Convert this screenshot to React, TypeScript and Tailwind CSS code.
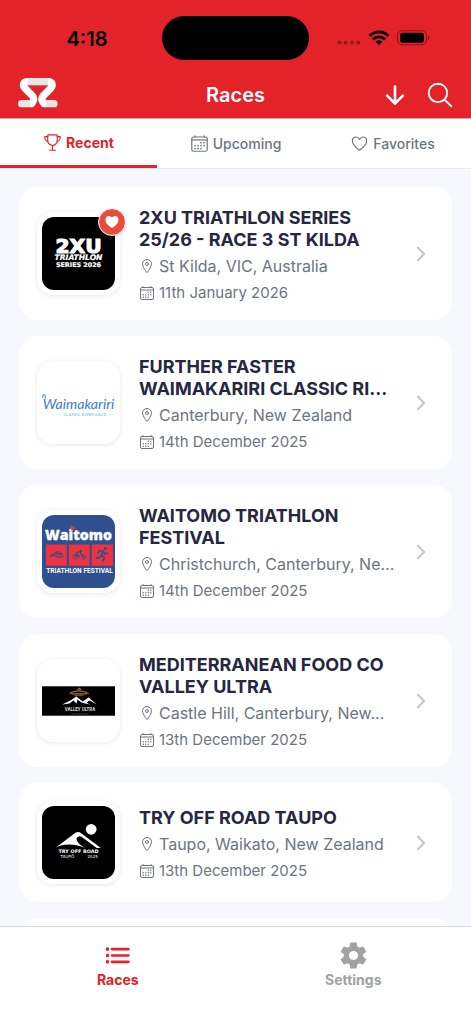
import type { ReactNode } from "react";
import {
  IoArrowDown,
  IoCalendarOutline,
  IoChevronForward,
  IoHeart,
  IoHeartOutline,
  IoList,
  IoLocationOutline,
  IoSearchOutline,
  IoSettingsSharp,
  IoTrophyOutline,
} from "react-icons/io5";

function BrandMark() {
  return (
    <svg viewBox="0 0 120 90" className="h-[30px] w-10" role="img" aria-label="Home">
      <g fill="none" strokeWidth="22">
        <path d="M26 11H94" stroke="#e6e6e6" />
        <path d="M11 77H40M79 77H108" stroke="#e6e6e6" strokeLinecap="round" />
        <path d="M29 11C15 11 13 23 22 32L43 53C51 62 46 77 36 77" stroke="#fff" />
        <path d="M90 11C104 11 106 23 97 32L76 53C68 62 73 77 83 77" stroke="#fff" />
      </g>
    </svg>
  );
}

function StatusIcons() {
  return (
    <svg viewBox="0 0 94 18" className="h-[18px] w-[94px]" aria-hidden="true">
      <g fill="#000" fillOpacity="0.3">
        <circle cx="3.5" cy="13.5" r="2.1" />
        <circle cx="9.7" cy="13.5" r="2.1" />
        <circle cx="16" cy="13.5" r="2.1" />
        <circle cx="22.2" cy="13.5" r="2.1" />
      </g>
      <g fill="none" stroke="#000" strokeWidth="2.8">
        <path d="M33.600 7C38.700 1.500 47.300 1.500 52.400 7" />
        <path d="M36.800 10.500C40.200 7 45.800 7 49.200 10.500" />
      </g>
      <path d="M39.700 12.700Q43 9.900 46.300 12.700L43 16Z" />
      <rect x="61.500" y="1.800" width="29" height="14" rx="4.500" fill="none" stroke="#000" strokeOpacity="0.4" />
      <rect x="64" y="3.800" width="24" height="10" rx="2.800" />
      <path d="M92 7V11Q93.200 10.400 93.200 9T92 7Z" fillOpacity="0.5" />
    </svg>
  );
}

function TwoXuLogo() {
  return (
    <svg viewBox="0 0 72 72" className="size-full rounded-xl bg-black">
      <g fill="#fff" textAnchor="middle" fontFamily="DejaVu Sans, sans-serif" fontWeight="700" stroke="#fff">
        <text x="36" y="35.500" fontSize="20" strokeWidth="1.200">2XU</text>
        <text x="36" y="42.800" fontSize="7.500" strokeWidth="0.2" fontStyle="italic">TRIATHLON</text>
        <text x="36" y="49.500" fontSize="6.300" strokeWidth="0.2">SERIES 2026</text>
      </g>
    </svg>
  );
}

function WaimakaririLogo() {
  return (
    <svg viewBox="0 0 72 72" className="size-full rounded-xl bg-white">
      <text x="36" y="42" textAnchor="middle" fontFamily="Lato, cursive" fontStyle="italic" fontSize="14" fill="#3b7bc0">Waimakariri</text>
      <path d="M0 31C2 27 4 28 3 32" fill="none" stroke="#3b7bc0" strokeWidth="1" />
      <path d="M10 48H19M65 48H71" stroke="#bfe6f5" strokeWidth="0.6" />
      <text x="42" y="49.500" textAnchor="middle" fontFamily="DejaVu Sans, sans-serif" fontWeight="700" fontSize="3.600" fill="#8dd3ef">CLASSIC RIVER RACE</text>
    </svg>
  );
}

function WaitomoLogo() {
  return (
    <svg viewBox="0 0 72 72" className="size-full rounded-xl bg-[#304f8f]">
      <text x="36" y="24.500" textAnchor="middle" fontFamily="Open Sans, sans-serif" fontWeight="800" fontSize="14" fill="#fff" stroke="#fff" strokeWidth="0.300">Waitomo</text>
      <path d="M28 10L33.500 13L29 15.500Z" fill="#ed3340" />
      <path d="M4 29H24.500V50H4ZM26.500 29H47V50H26.500ZM49 29H70V50H49Z" fill="#ed3340" />
      <g fill="none" stroke="#304f8f" strokeLinecap="round" strokeLinejoin="round">
        <path d="M8 41Q11 39.500 14 41T21 41" strokeWidth="1" />
        <path d="M9 39.500L14 38L17 39.500M12 38.500L15.500 36L18 38" strokeWidth="1.200" />
        <circle cx="19.300" cy="38.500" r="0.8" fill="#304f8f" />
        <circle cx="33" cy="41.500" r="2" strokeWidth="0.8" />
        <circle cx="41" cy="41.500" r="2" strokeWidth="0.8" />
        <path d="M33 41L34 37.500L37 36L39 39L41 41M34 38L37 41" strokeWidth="1.200" />
        <circle cx="38.500" cy="35.500" r="0.7" fill="#304f8f" />
        <path d="M60.500 35.500L58.500 39.500L61.500 42L60 45.500M58.500 39.500L56 42.500L53.500 42.500M60.500 35.500L57 35L55 37.500M60.500 36L62 38.500L64.500 37.500" strokeWidth="1.600" />
        <circle cx="62.500" cy="33" r="1" fill="#304f8f" />
      </g>
      <text x="37" y="57" textAnchor="middle" fontFamily="Roboto, sans-serif" fontWeight="700" fontSize="6.500" fill="#fff">TRIATHLON FESTIVAL</text>
    </svg>
  );
}

function ValleyUltraLogo() {
  return (
    <svg viewBox="0 0 72 72" className="size-full bg-white">
      <rect y="22" width="72" height="29" fill="#000" />
      <path d="M27 29Q36 24 46 29M29 29.500H44M35 25.500L37 24L38.500 25.500" fill="none" stroke="#a87a32" strokeWidth="1.100" />
      <path d="M32 31.200H41" stroke="#a87a32" strokeWidth="0.700" />
      <path d="M20 40L28 36L34 32L40 37L46 33L54 40L47 36L44 38L47 40L39 38L35 35L34 39L31 36L27 39Z" fill="#fff" />
      <text x="37.500" y="46.800" textAnchor="middle" fontFamily="Roboto, sans-serif" fontWeight="700" fontSize="4.400" fill="#ddd">VALLEY ULTRA</text>
      <path d="M29 49.300H46" stroke="#666" strokeWidth="0.700" strokeDasharray="1.500 0.700" />
    </svg>
  );
}

function TryOffRoadLogo() {
  return (
    <svg viewBox="0 0 72 72" className="size-full rounded-xl bg-black">
      <circle cx="48.500" cy="23" r="5.300" fill="#fff" />
      <path d="M13 41.500L33 26.500Q36 24.800 39 27L58 41.500H54L40 31Q36 28 34 32Q34 36 42 41.500Q36 38 26 38Q18 38 13 41.500Z" fill="#fff" />
      <g fill="#fff" fontFamily="DejaVu Sans, sans-serif" textAnchor="middle">
        <text x="36" y="46" fontSize="4.800" fontWeight="700">TRY OFF ROAD</text>
        <text x="25" y="50.800" fontSize="4">TAUPŌ</text>
        <text x="50" y="50.800" fontSize="4">2025</text>
      </g>
    </svg>
  );
}

type Race = { title: string; place: string; date: string; logo: ReactNode; favorite?: boolean };

const races: Race[] = [
  { title: "2XU TRIATHLON SERIES 25/26 - RACE 3 ST KILDA", place: "St Kilda, VIC, Australia", date: "11th January 2026", logo: <TwoXuLogo />, favorite: true },
  { title: "FURTHER FASTER WAIMAKARIRI CLASSIC RI...", place: "Canterbury, New Zealand", date: "14th December 2025", logo: <WaimakaririLogo /> },
  { title: "WAITOMO TRIATHLON FESTIVAL", place: "Christchurch, Canterbury, Ne...", date: "14th December 2025", logo: <WaitomoLogo /> },
  { title: "MEDITERRANEAN FOOD CO VALLEY ULTRA", place: "Castle Hill, Canterbury, New...", date: "13th December 2025", logo: <ValleyUltraLogo /> },
  { title: "TRY OFF ROAD TAUPO", place: "Taupo, Waikato, New Zealand", date: "13th December 2025", logo: <TryOffRoadLogo /> },
];

function RaceCard({ race }: { race: Race }) {
  return (
    <a href="#race" className="flex items-center rounded-[18px] bg-white py-4 pr-5 pl-[18px]">
      <div className="relative my-0.5 size-[83px] shrink-0 rounded-2xl bg-white p-[5px] shadow-[0_1px_5px_rgba(0,0,0,0.09)]">
        {race.logo}
        {race.favorite && (
          <span className="absolute -top-1 -right-1.5 flex size-7 items-center justify-center rounded-full border border-white bg-[#e84c3d] text-white shadow">
            <IoHeart size={16} />
          </span>
        )}
      </div>
      <div className="ml-[19px] min-w-0 flex-1 pt-1">
        <h2 className="line-clamp-2 text-[18px] leading-[22px] font-bold text-[#26263f]">{race.title}</h2>
        <p className="mt-1 flex items-center gap-1 text-[16px] leading-[22px] text-[#6c757d]">
          <IoLocationOutline size={16} className="shrink-0" />
          <span className="truncate">{race.place}</span>
        </p>
        <p className="mt-1 flex items-center gap-1 text-[15px] leading-[23px] text-[#6c757d]">
          <IoCalendarOutline size={16} className="shrink-0" />
          <span className="truncate">{race.date}</span>
        </p>
      </div>
      <IoChevronForward size={22} className="ml-1 shrink-0 text-[#c6c6c6]" />
    </a>
  );
}

export default function App() {
  return (
    <div className="flex h-screen flex-col overflow-hidden bg-[#f7f8fd] font-['Inter',sans-serif]">
      <header className="shrink-0 border-b border-[#d5aaae] bg-[#e32229]">
        <div className="grid grid-cols-[1fr_147px_1fr] items-center pt-4">
          <span className="pt-0.5 pl-3 text-center text-[20px] leading-6 font-semibold text-black">4:18</span>
          <span className="h-11 rounded-full bg-black" />
          <span className="flex justify-center pr-[30px] pl-4"><StatusIcons /></span>
        </div>
        <div className="grid h-[58px] grid-cols-[1fr_auto_1fr] items-center px-[18px] pt-3">
          <span className="pb-1"><BrandMark /></span>
          <h1 className="text-[20px] leading-6 font-semibold text-white">Races</h1>
          <div className="flex items-center justify-end gap-4 text-white">
            <button type="button" aria-label="Sort"><IoArrowDown size={28} /></button>
            <button type="button" aria-label="Search" className="-mr-0.5"><IoSearchOutline size={30} /></button>
          </div>
        </div>
      </header>

      <nav aria-label="Race lists" className="grid h-[50px] shrink-0 grid-cols-3 border-b border-[#e9ecef] bg-white text-[14px] text-[#6c757d]">
        <button type="button" aria-pressed="true" className="flex items-center justify-center gap-1 border-b-[3px] border-[#e32229] font-bold text-[#e32229]">
          <IoTrophyOutline size={19} />Recent
        </button>
        <button type="button" aria-pressed="false" className="flex items-center justify-center gap-1 font-medium">
          <IoCalendarOutline size={19} />Upcoming
        </button>
        <button type="button" aria-pressed="false" className="flex items-center justify-center gap-1 font-medium">
          <IoHeartOutline size={19} />Favorites
        </button>
      </nav>

      <main className="flex min-h-0 flex-1 flex-col gap-4 overflow-hidden px-[19px] pt-[18px]">
        {races.map((race) => <RaceCard key={race.title} race={race} />)}
        <div className="h-[119px] shrink-0 rounded-[18px] bg-white" />
      </main>

      <nav aria-label="Main" className="grid h-[98px] shrink-0 grid-cols-2 border-t border-[#d8dade] bg-white text-[14px] leading-5 font-bold">
        <a href="#races" className="flex flex-col items-center pt-[14px] text-[#e32229]">
          <IoList size={29} />Races
        </a>
        <a href="#settings" className="flex flex-col items-center pt-[14px] text-[#a0a2a4]">
          <IoSettingsSharp size={29} />Settings
        </a>
      </nav>
    </div>
  );
}
